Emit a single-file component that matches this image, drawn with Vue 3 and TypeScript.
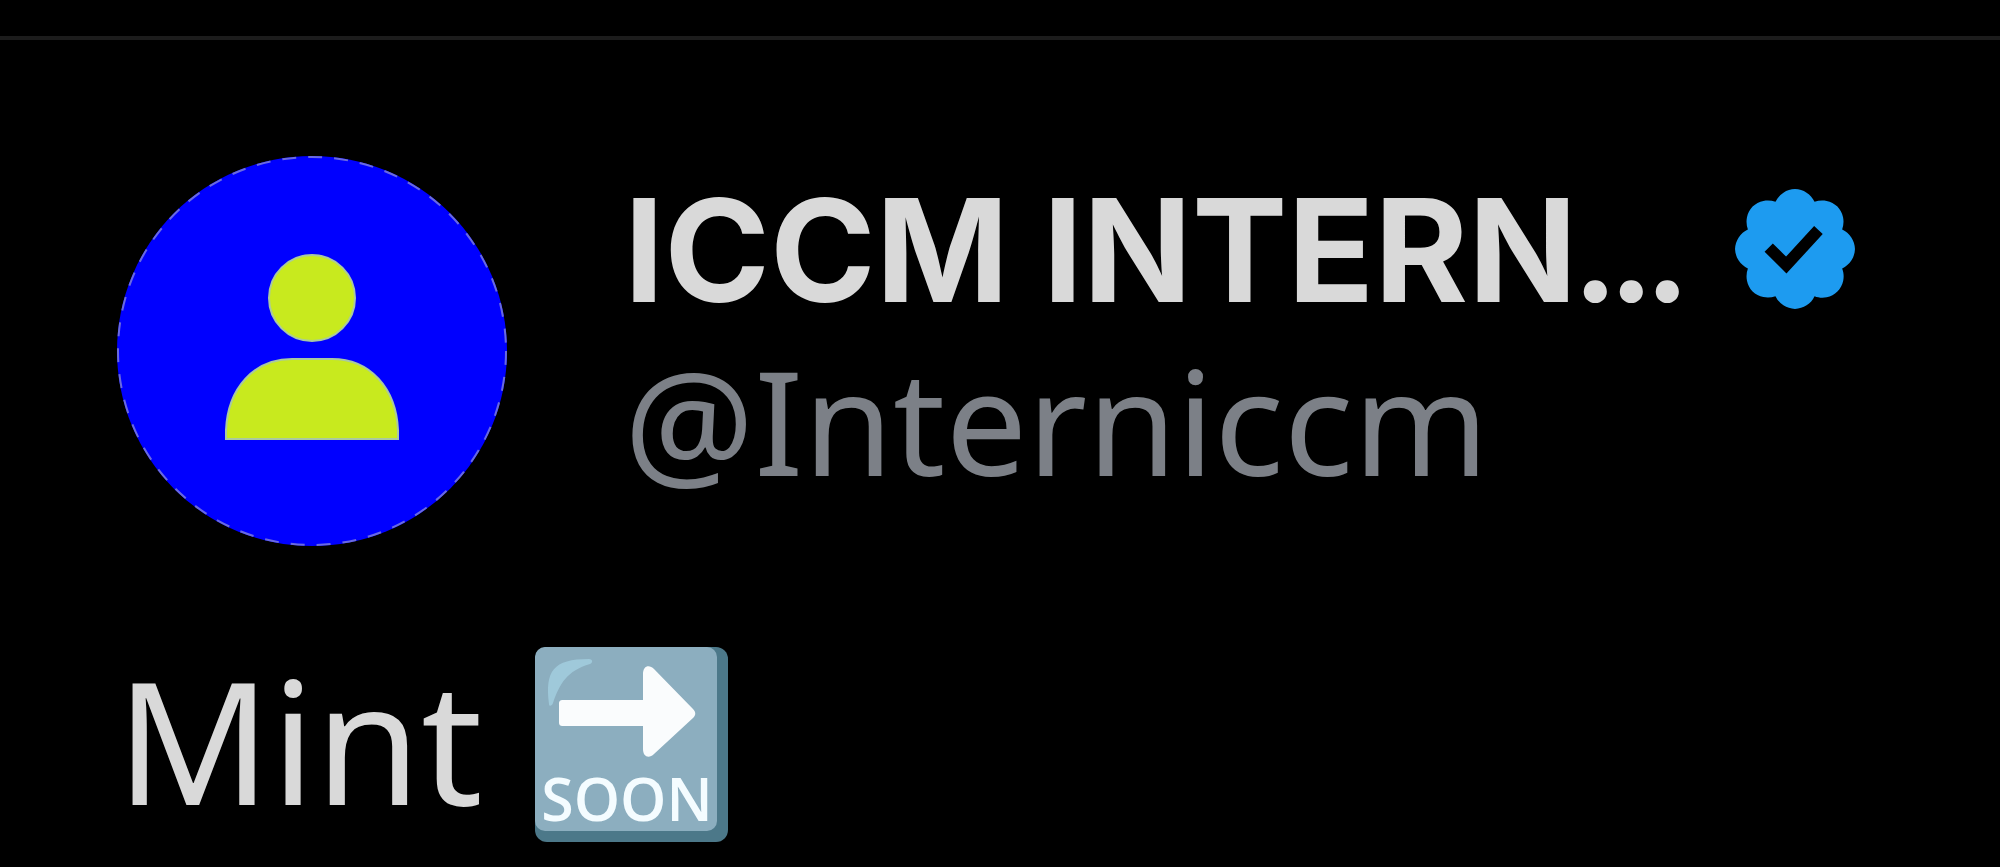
<script setup lang="ts">
interface Post {
  name: string
  handle: string
  text: string
}

const post: Post = {
  name: 'ICCM INTERN',
  handle: '@Interniccm',
  text: 'Mint',
}
</script>

<template>
  <article class="post">
    <header class="author">
      <svg class="avatar" viewBox="0 0 392 392" role="img" aria-label="Profile picture">
        <circle cx="196" cy="196" r="195" fill="#0000ff" />
        <circle cx="196" cy="196" r="194" fill="none" stroke="#6a6ae0" stroke-width="2" stroke-dasharray="14 12" />
        <g fill="#c8ea1e" stroke="#a9c9a0" stroke-width="2">
          <circle cx="196" cy="143" r="43" />
          <path d="M110 284v-9C112 233 138 204 176 204h40c38 0 64 29 66 71v9z" />
        </g>
      </svg>
      <div class="identity">
        <div class="name-row">
          <h1 class="name">{{ post.name }}<span class="dots">...</span></h1>
          <svg class="badge" viewBox="1.6 1.6 18.8 18.8" role="img" aria-label="Verified account">
            <path
              fill="#1d9bf0"
              d="M20.396 11c-.018-.646-.215-1.275-.57-1.816-.354-.54-.852-.972-1.438-1.246.223-.607.27-1.264.14-1.897-.131-.634-.437-1.218-.882-1.687-.47-.445-1.053-.75-1.687-.882-.633-.13-1.29-.083-1.897.14-.273-.587-.704-1.086-1.245-1.44S11.647 1.62 11 1.604c-.646.017-1.273.213-1.813.568s-.969.854-1.24 1.44c-.608-.223-1.267-.272-1.902-.14-.635.13-1.22.436-1.69.882-.445.47-.749 1.055-.878 1.688-.13.633-.08 1.29.144 1.896-.587.274-1.087.705-1.443 1.245-.356.54-.555 1.17-.574 1.817.02.647.218 1.276.574 1.817.356.54.856.972 1.443 1.245-.224.606-.274 1.263-.144 1.896.13.634.433 1.218.877 1.688.47.443 1.054.747 1.687.878.633.132 1.29.084 1.897-.136.274.586.705 1.084 1.246 1.439.54.354 1.17.551 1.816.569.647-.016 1.276-.213 1.817-.567s.972-.854 1.245-1.44c.604.239 1.266.296 1.903.164.636-.132 1.22-.447 1.68-.907.46-.46.776-1.044.908-1.681s.075-1.299-.165-1.903c.586-.274 1.084-.705 1.439-1.246.354-.54.551-1.17.569-1.816zM9.662 14.85l-3.429-3.428 1.293-1.302 2.072 2.072 4.4-4.794 1.347 1.246z"
            />
          </svg>
        </div>
        <p class="handle">{{ post.handle }}</p>
      </div>
    </header>
    <p class="body">
      {{ post.text }}
      <svg class="emoji" viewBox="0 0 193 195" role="img" aria-label="Soon arrow">
        <rect width="193" height="195" rx="12" fill="#4c7889" />
        <rect width="182" height="184" rx="10" fill="#8caebf" />
        <path d="M14 57C10 24 18 12 54 12c4 0 4 4 1 5C32 24 25 36 18 56c-1 3-4 4-4 1z" fill="#9fc9da" />
        <path d="M28 53h80V27c0-8 6-10 11-5l39 40c3 3 3 6 0 9l-39 36c-5 5-11 3-11-5V79H28c-3 0-4-1-4-4V57c0-3 1-4 4-4z" fill="#fafcfd" />
        <text class="soon" x="92" y="174" text-anchor="middle">SOON</text>
      </svg>
    </p>
  </article>
</template>

<style>
body {
  margin: 0;
  background: #000;
}
</style>

<style scoped>
.post {
  margin-top: 36px;
  border-top: 4px solid #1c1c1c;
  padding: 115px 116px 0;
  color: #d9d9d9;
  font-family: 'Noto Sans', sans-serif;
}

.author {
  display: flex;
  align-items: flex-start;
  gap: 116px;
}

.avatar {
  flex: none;
  width: 392px;
  height: 392px;
}

.identity {
  display: flex;
  flex-direction: column;
  gap: 10px;
  padding-top: 12px;
}

.name-row {
  display: flex;
  align-items: center;
  gap: 50px;
}

.name {
  margin: 0;
  font: 700 143px/160px Inter, sans-serif;
  white-space: nowrap;
}

.dots {
  font-family: Lato, sans-serif;
  font-size: 152px;
  line-height: 1;
}

.badge {
  flex: none;
  width: 120px;
  height: 120px;
}

.handle {
  margin: 0;
  color: #7c8087;
  font-size: 145px;
  line-height: 160px;
}

.body {
  margin: 82px 0 0;
  font-size: 171px;
  line-height: 220px;
}

.emoji {
  width: 193px;
  height: 195px;
  margin-left: 8px;
  vertical-align: -37px;
}

.soon {
  fill: #f4fcff;
  font: 600 59px 'Open Sans', sans-serif;
}
</style>
